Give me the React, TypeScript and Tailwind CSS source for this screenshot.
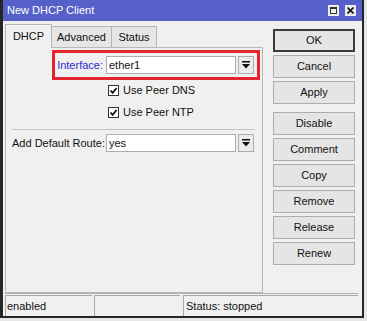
import React from 'react';

const font = { fontFamily: '"Liberation Sans", Arial, sans-serif' };

const DropArrow = () => (
  <div className="w-[16px] h-[18px] border border-[#adadad] bg-[#ececec] flex items-center justify-center">
    <svg width="8" height="8" viewBox="0 0 8 8">
      <rect x="0" y="0" width="8" height="1.5" fill="#111" />
      <path d="M0 3 L8 3 L4 7.5 Z" fill="#111" />
    </svg>
  </div>
);

const Check = ({ label }: { label: string }) => (
  <div className="flex items-center h-[20px] pl-[102px]">
    <div className="w-[11px] h-[11px] border border-[#333] bg-white flex items-center justify-center">
      <svg width="9" height="9" viewBox="0 0 9 9">
        <path d="M1.5 4.5 L3.6 6.8 L7.6 2" stroke="#111" strokeWidth="1.8" fill="none" />
      </svg>
    </div>
    <span className="ml-[4px] text-[11px] text-[#111] whitespace-nowrap">{label}</span>
  </div>
);

const Btn = ({ label, primary }: { label: string; primary?: boolean }) => (
  <button
    className={`w-[82px] h-[23px] bg-[#e5e5e5] text-[11px] text-[#111] flex items-center justify-center ${
      primary ? 'border-2 border-[#3c3c3c]' : 'border border-[#adadad]'
    }`}
  >
    {label}
  </button>
);

export default function App() {
  return (
    <div className="w-[367px] h-[321px] bg-[#e6e6e6]" style={font}>
      <div className="w-[364px] h-[318px] border-l-[3px] border-r-[2px] border-b-[2px] border-[#262626] bg-[#f0f0f0] flex flex-col">
        {/* title bar */}
        <div className="h-[21px] bg-[#5560c8] flex items-center pl-[4px] pr-[6px]">
          <span className="text-[11px] text-white flex-1 whitespace-nowrap">New DHCP Client</span>
          <div className="w-[11px] h-[11px] bg-[#ececec] flex items-center justify-center">
            <div className="w-[7px] h-[7px] border border-[#333] border-t-2" />
          </div>
          <div className="w-[11px] h-[11px] bg-[#ececec] ml-[6px] flex items-center justify-center">
            <svg width="7" height="7" viewBox="0 0 7 7">
              <path d="M0.5 0.5 L6.5 6.5 M6.5 0.5 L0.5 6.5" stroke="#111" strokeWidth="1.6" />
            </svg>
          </div>
        </div>

        <div className="flex h-[272px]">
          {/* left: tabs */}
          <div className="w-[263px] pl-[2px] pt-[3px] flex flex-col">
            <div className="flex items-end h-[23px] text-[11px] text-[#111]">
              <div className="w-[47px] h-[24px] border border-b-0 border-[#b5b5b5] bg-[#f0f0f0] flex items-center justify-center relative z-10 -mb-px">
                DHCP
              </div>
              <div className="w-[60px] h-[21px] border border-l-0 border-b-0 border-[#b5b5b5] bg-[#e6e6e6] flex items-center justify-center">
                Advanced
              </div>
              <div className="w-[45px] h-[21px] border border-l-0 border-b-0 border-[#b5b5b5] bg-[#e6e6e6] flex items-center justify-center">
                Status
              </div>
            </div>
            <div className="w-[258px] flex-1 border border-[#b9b9b9] bg-[#f0f0f0]">
              <div className="mt-[2px] ml-[46px] w-[208px] h-[30px] border-[3px] border-[#e3262b] flex items-center">
                <span className="w-[48px] shrink-0 text-right text-[11px] text-[#2b2bd0] whitespace-nowrap">Interface:</span>
                <div className="ml-[3px] w-[130px] h-[18px] bg-white border border-[#abadb3] flex items-center px-[2px] text-[11px] text-[#111]">
                  ether1
                </div>
                <div className="ml-[2px]">
                  <DropArrow />
                </div>
              </div>
              <Check label="Use Peer DNS" />
              <div className="mt-[2px]">
                <Check label="Use Peer NTP" />
              </div>
              <div className="mt-[7px] ml-[6px] w-[243px] h-px bg-[#c4c4c4]" />
              <div className="mt-[4px] ml-[6px] flex items-center h-[18px]">
                <span className="w-[91px] shrink-0 text-right text-[11px] text-[#111] whitespace-nowrap">Add Default Route:</span>
                <div className="ml-[3px] w-[130px] h-[18px] bg-white border border-[#abadb3] flex items-center px-[2px] text-[11px] text-[#111]">
                  yes
                </div>
                <div className="ml-[2px]">
                  <DropArrow />
                </div>
              </div>
            </div>
          </div>

          {/* right: buttons */}
          <div className="ml-[7px] pt-[8px] flex flex-col">
            <div className="flex flex-col gap-[3px]">
              <Btn label="OK" primary />
              <Btn label="Cancel" />
              <Btn label="Apply" />
            </div>
            <div className="mt-[8px] flex flex-col gap-[3px]">
              <Btn label="Disable" />
              <Btn label="Comment" />
              <Btn label="Copy" />
              <Btn label="Remove" />
              <Btn label="Release" />
              <Btn label="Renew" />
            </div>
          </div>
        </div>

        {/* status bar */}
        <div className="ml-[2px] w-[353px] flex-1 border-t border-[#b0b0b0] pt-[1px] flex text-[11px] text-[#111]">
          <div className="w-[87px] h-[21px] border-l border-t border-[#a8a8a8] flex items-center pl-[1px]">enabled</div>
          <div className="ml-[2px] w-[86px] h-[21px] border-l border-t border-[#a8a8a8]" />
          <div className="ml-[3px] flex-1 h-[21px] border-l border-t border-[#a8a8a8] flex items-center pl-[2px] whitespace-nowrap">
            Status: stopped
          </div>
        </div>
      </div>
    </div>
  );
}
